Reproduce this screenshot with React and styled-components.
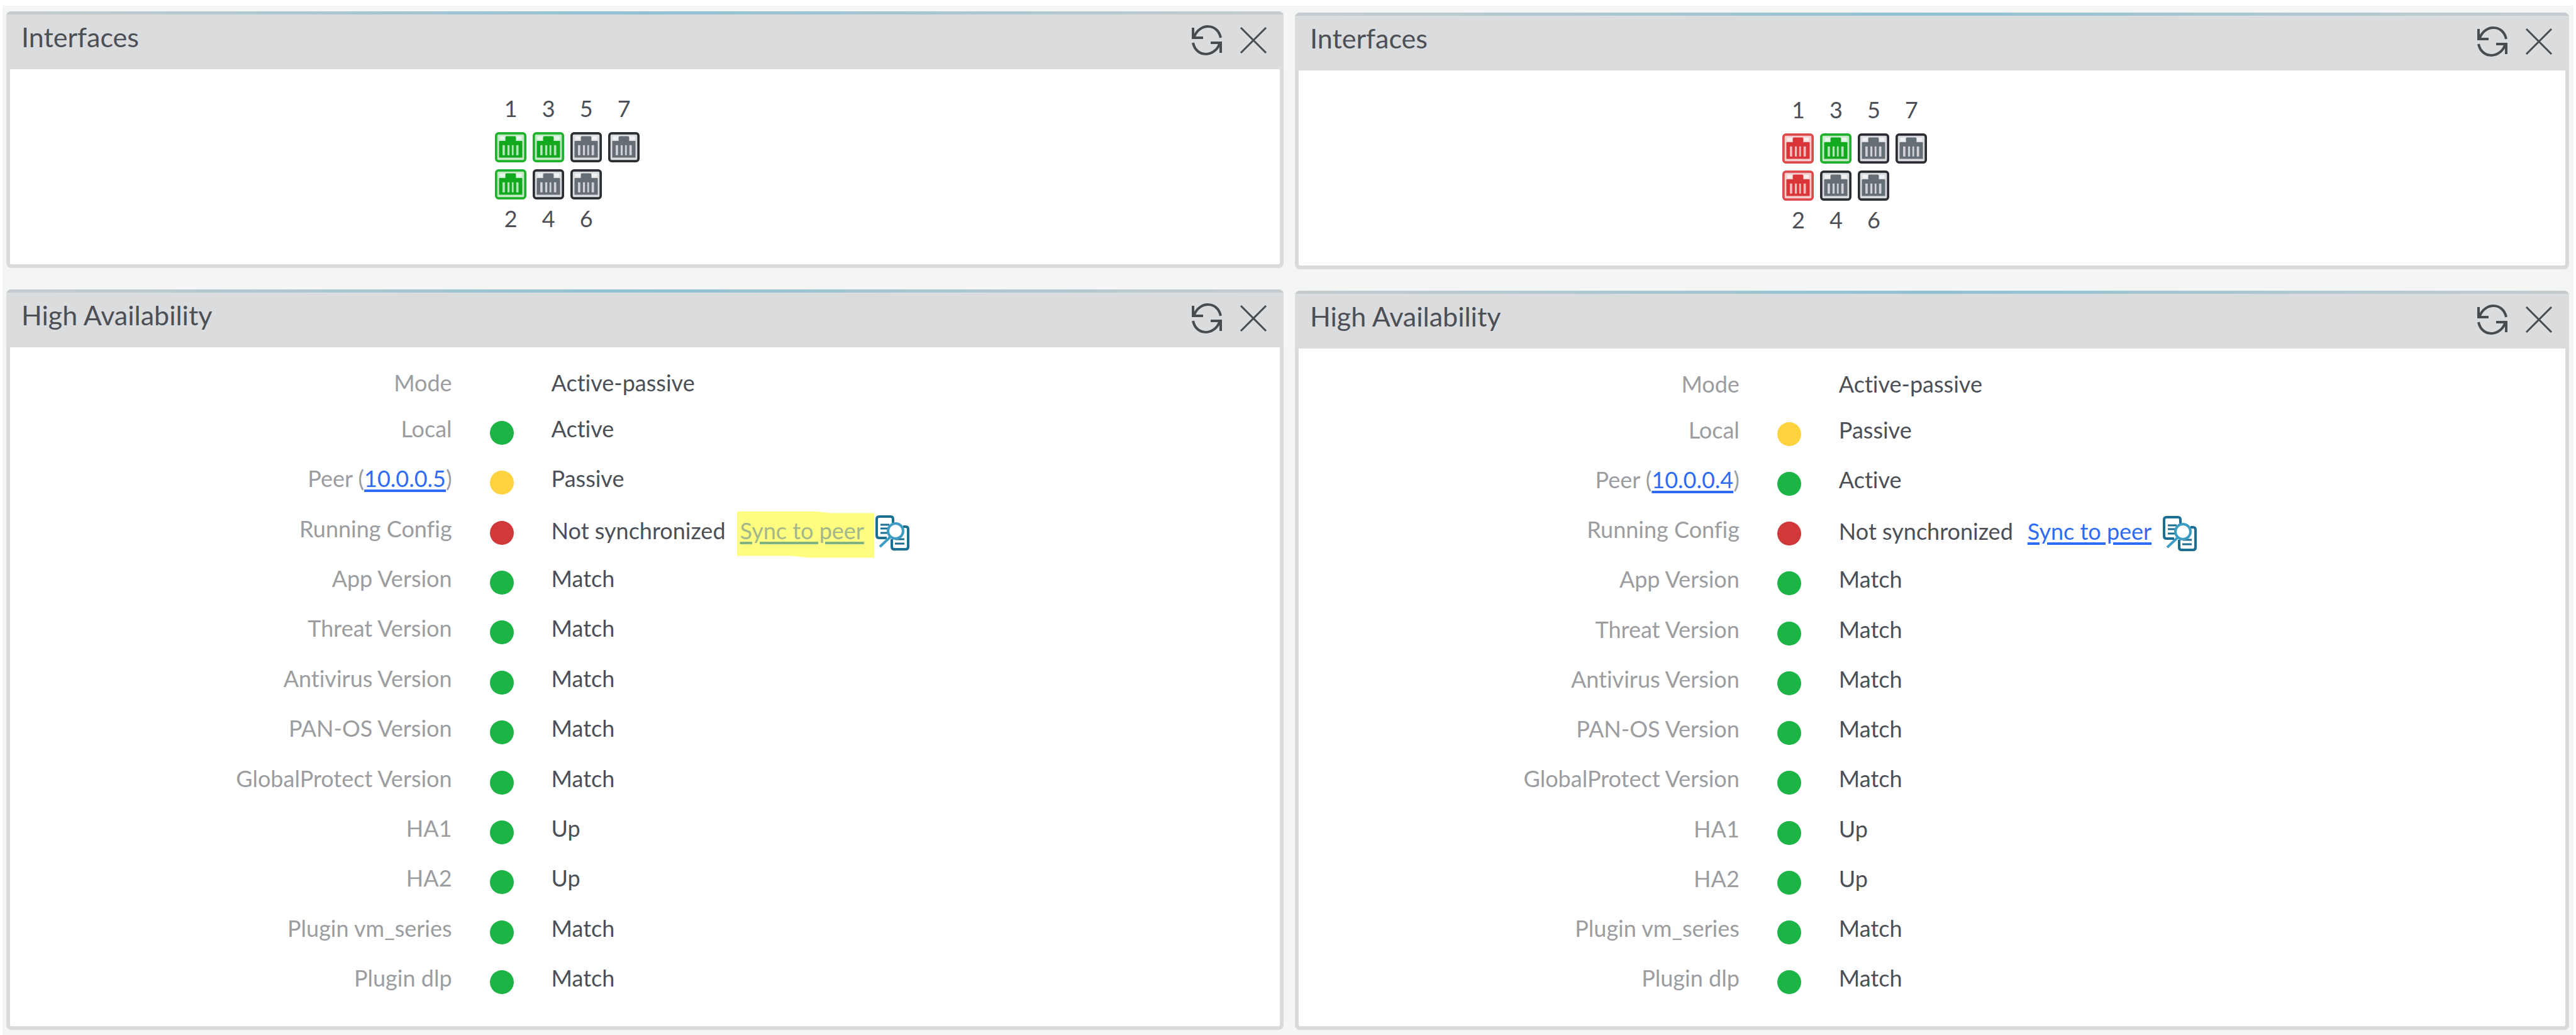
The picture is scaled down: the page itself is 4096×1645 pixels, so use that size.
import React from 'react';
import styled, { createGlobalStyle, css } from 'styled-components';

const GlobalStyle = createGlobalStyle`
  *, *::before, *::after { box-sizing: border-box; }
  body {
    margin: 0;
    background: #ffffff;
    color: #4c5056;
    font-family: Lato, "Open Sans", sans-serif;
    font-size: 36px;
    line-height: 44px;
    font-variant-ligatures: none;
  }
`;

const Dashboard = styled.main`
  min-height: 100vh;
  padding: 9px 4px 0;
  display: flex;
`;

const Board = styled.div`
  flex: 1;
  display: grid;
  grid-template-columns: 2031fr 2026fr;
  column-gap: 18px;
  padding: 9px 7px 8px 6px;
  background: #f4f6f5;
`;

const Column = styled.div`
  display: flex;
  flex-direction: column;
  gap: 34px;
  padding-top: ${(p) => (p.$lowered ? '2px' : '0')};
`;

const Panel = styled.section`
  display: flex;
  flex-direction: column;
  flex: ${(p) => (p.$grow ? '1' : 'none')};
  border: 6px solid #d8dbda;
  border-top: 0;
  border-radius: 8px;
  background: #ffffff;
`;

const PanelHeader = styled.header`
  height: 92px;
  margin: 0 -6px;
  padding-top: 5px;
  border-radius: 8px 8px 0 0;
  background: linear-gradient(90deg, #c6cccf, #8fc1d3 50%, #c6cccf);
`;

const HeaderBar = styled.div`
  display: flex;
  align-items: flex-start;
  justify-content: space-between;
  height: 100%;
  padding: 12px 24px 0;
  background: #dbdcde;
`;

const Title = styled.h2`
  margin: 0;
  font-size: 43px;
  line-height: 48px;
  font-weight: 400;
`;

const Tools = styled.div`
  display: flex;
  gap: 26px;
  padding-top: 4px;
`;

const IconButton = styled.button`
  display: flex;
  width: 48px;
  height: 50px;
  padding: 0;
  border: 0;
  background: none;
  color: #484c4e;
  svg { width: 100%; height: 100%; }
`;

const PortGrid = styled.div`
  display: grid;
  grid-template-columns: repeat(4, 50px);
  column-gap: 10px;
  padding: 40px 0 32px 38.2%;
  text-align: center;
`;

const PortNumber = styled.span`
  height: 60px;
  line-height: ${(p) => (p.$below ? '38px' : '44px')};
`;

const PortIcon = styled.svg`
  width: 50px;
  height: 48px;
  margin-bottom: 11px;
`;

const StatusList = styled.dl`
  flex: 1;
  display: grid;
  grid-template-rows: 66px repeat(12, 1fr);
  margin: 0;
  padding: 30px 0;
`;

const StatusRow = styled.div`
  display: grid;
  grid-template-columns: 34.8% 158px 1fr;
  align-items: center;
`;

const Label = styled.dt`
  padding-bottom: 14px;
  color: #9b9da0;
  text-align: right;
`;

const Value = styled.dd`
  display: flex;
  align-items: center;
  margin: 0;
  padding-bottom: ${(p) => (p.$withActions ? '8px' : '14px')};
`;

const Dot = styled.span`
  justify-self: center;
  width: 38px;
  height: 38px;
  border-radius: 50%;
  background: ${(p) => p.$color};
`;

const Link = styled.a`
  color: #2f6cf6;
  text-decoration-thickness: 4px;
  text-underline-offset: 4px;
`;

const SyncLink = styled(Link)`
  display: flex;
  align-items: center;
  height: 74px;
  margin: -8px 2px -22px 18px;
  padding: 0 16px 14px 5px;
  ${(p) => p.$marked && css`
    color: #a2b78a;
    text-decoration-color: #7fb383;
    background: #fffd80;
    clip-path: polygon(0 0, 57% 0, 68% 3px, 100% 3px, 100% 100%, 52% 100%, 40% 71px, 0 71px);
  `}
`;

const CompareButton = styled(IconButton)`
  width: 54px;
  height: 56px;
  margin: -2px 0 -10px;
  color: #1a6f92;
`;

const COLORS = { green: '#1db446', yellow: '#ffd23f', red: '#d03839' };

const PORT_COLORS = {
  up: { edge: '#1eb12c', jack: '#12a91f', pad: '#c4eac7', pin: '#b5e4b8' },
  down: { edge: '#dc4a4c', jack: '#d93538', pad: '#f6cdce', pin: '#f2babb' },
  off: { edge: '#2b2f33', jack: '#656d75', pad: '#dadcdf', pin: '#d0d2d6' },
};

function Port({ state }) {
  const c = PORT_COLORS[state];
  return (
    <PortIcon viewBox="0 0 54 51" preserveAspectRatio="none" role="img" aria-label={`Port ${state}`}>
      <rect x="2" y="2" width="50" height="47" rx="4" fill={c.pad} stroke={c.edge} strokeWidth="4" />
      <path d="M8 7h9v6H8zM37 7h9v6h-9z" fill="#ffffff" opacity="0.6" />
      <path d="M8 15h10V9q0-2 2-2h14q2 0 2 2v6h10q1 0 1 1v27H7V16q0-1 1-1z" fill={c.jack} />
      <path d="M13 22h4v17h-4zM21.500 22h3.500v17h-3.500zM29 22h3v17h-3zM36.500 22h4v17h-4z" fill={c.pin} />
    </PortIcon>
  );
}

function RefreshIcon() {
  return (
    <svg viewBox="0 0 48 50" fill="none" stroke="currentColor" strokeWidth="4" aria-hidden="true">
      <path d="M4 19C12-2 41-3 46 21" />
      <path d="M2 5v16h16" />
      <path d="M2 29c5 24 34 23 42 2" />
      <path d="M46 45V29H30" />
    </svg>
  );
}

function CloseIcon() {
  return (
    <svg viewBox="0 0 48 50" fill="none" stroke="currentColor" strokeWidth="3" aria-hidden="true">
      <path d="M4 5l40 40M44 5L4 45" />
    </svg>
  );
}

function CompareIcon() {
  return (
    <svg viewBox="0 0 54 56" fill="none" stroke="currentColor" strokeWidth="4" aria-hidden="true">
      <path d="M28 12V6q0-4-4-4H6Q2 2 2 6v26q0 4 4 4h12" />
      <path d="M44 18h4q4 0 4 4v28q0 4-4 4H30q-4 0-4-4V38" />
      <path d="M8 15h14M8 21h12M8 28h12M31 45h15M32 38h14" strokeWidth="3" />
      <circle cx="32" cy="25" r="12" fill="#ffffff" stroke="#3d9cc4" />
      <path d="M23 35L7 50" stroke="#3d9cc4" />
    </svg>
  );
}

const MATCH_ROWS = ['App Version', 'Threat Version', 'Antivirus Version', 'PAN-OS Version', 'GlobalProtect Version'];

const DEVICES = [
  {
    id: 'a',
    odd: ['up', 'up', 'off', 'off'],
    even: ['up', 'off', 'off'],
    local: ['green', 'Active'],
    peer: ['yellow', 'Passive', '10.0.0.5'],
    marked: true,
  },
  {
    id: 'b',
    odd: ['down', 'up', 'off', 'off'],
    even: ['down', 'off', 'off'],
    local: ['yellow', 'Passive'],
    peer: ['green', 'Active', '10.0.0.4'],
    marked: false,
  },
];

function Widget({ title, grow, children }) {
  return (
    <Panel $grow={grow}>
      <PanelHeader>
        <HeaderBar>
          <Title>{title}</Title>
          <Tools>
            <IconButton type="button" aria-label={`Refresh ${title}`}><RefreshIcon /></IconButton>
            <IconButton type="button" aria-label={`Close ${title}`}><CloseIcon /></IconButton>
          </Tools>
        </HeaderBar>
      </PanelHeader>
      {children}
    </Panel>
  );
}

function Row({ label, color, withActions, children }) {
  return (
    <StatusRow>
      <Label>{label}</Label>
      {color ? <Dot $color={COLORS[color]} /> : <span />}
      <Value $withActions={withActions}>{children}</Value>
    </StatusRow>
  );
}

function Interfaces({ device }) {
  return (
    <Widget title="Interfaces">
      <PortGrid>
        {[1, 3, 5, 7].map((n) => <PortNumber key={n}>{n}</PortNumber>)}
        {device.odd.map((s, i) => <Port key={i} state={s} />)}
        {device.even.map((s, i) => <Port key={i} state={s} />)}
        <span />
        {[2, 4, 6].map((n) => <PortNumber key={n} $below>{n}</PortNumber>)}
      </PortGrid>
    </Widget>
  );
}

function HighAvailability({ device }) {
  const [peerColor, peerState, peerIp] = device.peer;
  return (
    <Widget title="High Availability" grow>
      <StatusList>
        <Row label="Mode">Active-passive</Row>
        <Row label="Local" color={device.local[0]}>{device.local[1]}</Row>
        <Row label={<>Peer (<Link href="#peer">{peerIp}</Link>)</>} color={peerColor}>{peerState}</Row>
        <Row label="Running Config" color="red" withActions>
          Not synchronized
          <SyncLink href="#sync" $marked={device.marked}>Sync to peer</SyncLink>
          <CompareButton type="button" aria-label="Compare configurations"><CompareIcon /></CompareButton>
        </Row>
        {MATCH_ROWS.map((label) => <Row key={label} label={label} color="green">Match</Row>)}
        <Row label="HA1" color="green">Up</Row>
        <Row label="HA2" color="green">Up</Row>
        <Row label="Plugin vm_series" color="green">Match</Row>
        <Row label="Plugin dlp" color="green">Match</Row>
      </StatusList>
    </Widget>
  );
}

export default function App() {
  return (
    <>
      <GlobalStyle />
      <Dashboard>
        <Board>
          {DEVICES.map((device, i) => (
            <Column key={device.id} $lowered={i === 1}>
              <Interfaces device={device} />
              <HighAvailability device={device} />
            </Column>
          ))}
        </Board>
      </Dashboard>
    </>
  );
}
